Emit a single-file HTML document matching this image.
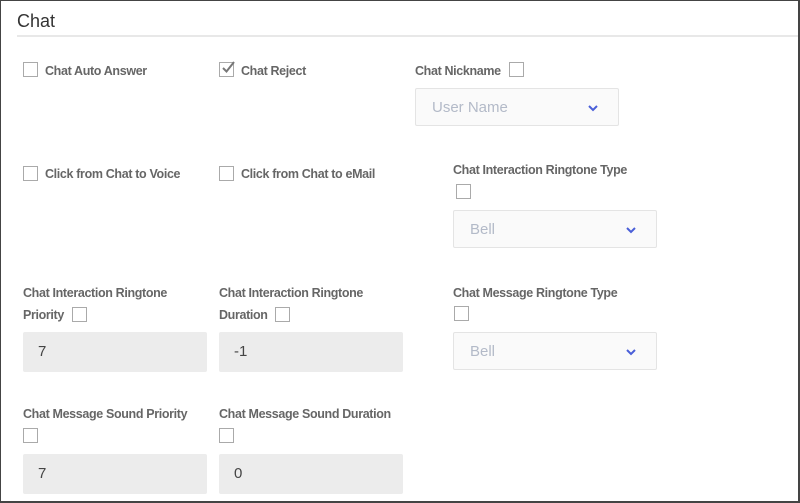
<!DOCTYPE html>
<html><head><style>
*{margin:0;padding:0;box-sizing:border-box}
body{width:800px;height:503px;overflow:hidden;background:#fff;font-family:"Liberation Sans",Arial,sans-serif;position:relative}
.frame{position:absolute;left:0;top:0;width:800px;height:503px;border:1px solid #444;border-right-width:2px;border-bottom-width:2px}
.h{position:absolute;left:17px;top:11px;font-size:18px;color:#333}
.line{position:absolute;left:17px;right:2px;top:35px;height:2px;background:#e8e8e8}
.cb{position:absolute;width:15px;height:15px;border:1.5px solid #aaa;background:#fff}
.lb{position:absolute;font-size:12.5px;font-weight:bold;color:#666;line-height:22px;white-space:nowrap;letter-spacing:-0.35px}
.sel{position:absolute;width:204px;height:38px;background:#fafafa;border:1px solid #e4e4e4;border-radius:2px;color:#b3bac8;font-size:15px;line-height:38px;padding-left:16px}
.sel svg{position:absolute;right:20px;top:16px}
.inp{position:absolute;width:184px;height:40px;background:#ececec;border-radius:2px;color:#444;font-size:15px;line-height:40px;padding-left:15px}
</style></head><body>
<div class="frame"></div>
<div class="h">Chat</div>
<div class="line"></div>

<div class="cb" style="left:23px;top:62px"></div><div class="lb" style="left:45px;top:60px">Chat Auto Answer</div>
<div class="cb" style="left:219px;top:62px"></div>
<svg style="position:absolute;left:220px;top:60px" width="16" height="16"><path d="M3 8 L6.5 11.5 L14 2" stroke="#777" stroke-width="2" fill="none"/></svg>
<div class="lb" style="left:241px;top:60px">Chat Reject</div>
<div class="lb" style="left:415px;top:60px">Chat Nickname</div><div class="cb" style="left:509px;top:62px"></div>
<div class="sel" style="left:415px;top:88px">User Name<svg width="10" height="7"><path d="M1 1 L5 5 L9 1" stroke="#4a5fd8" stroke-width="2" fill="none"/></svg></div>

<div class="cb" style="left:23px;top:166px"></div><div class="lb" style="left:45px;top:163px">Click from Chat to Voice</div>
<div class="cb" style="left:219px;top:166px"></div><div class="lb" style="left:241px;top:163px">Click from Chat to eMail</div>
<div class="lb" style="left:453px;top:159px">Chat Interaction Ringtone Type</div><div class="cb" style="left:456px;top:184px"></div>
<div class="sel" style="left:453px;top:210px">Bell<svg width="10" height="7"><path d="M1 1 L5 5 L9 1" stroke="#4a5fd8" stroke-width="2" fill="none"/></svg></div>

<div class="lb" style="left:23px;top:282px">Chat Interaction Ringtone</div>
<div class="lb" style="left:23px;top:304px">Priority</div><div class="cb" style="left:72px;top:307px"></div>
<div class="lb" style="left:219px;top:282px">Chat Interaction Ringtone</div>
<div class="lb" style="left:219px;top:304px">Duration</div><div class="cb" style="left:275px;top:307px"></div>
<div class="lb" style="left:453px;top:282px">Chat Message Ringtone Type</div><div class="cb" style="left:454px;top:306px"></div>
<div class="inp" style="left:23px;top:332px">7</div>
<div class="inp" style="left:219px;top:332px">-1</div>
<div class="sel" style="left:453px;top:332px">Bell<svg width="10" height="7"><path d="M1 1 L5 5 L9 1" stroke="#4a5fd8" stroke-width="2" fill="none"/></svg></div>

<div class="lb" style="left:23px;top:403px">Chat Message Sound Priority</div><div class="cb" style="left:23px;top:428px"></div>
<div class="lb" style="left:219px;top:403px">Chat Message Sound Duration</div><div class="cb" style="left:219px;top:428px"></div>
<div class="inp" style="left:23px;top:454px">7</div>
<div class="inp" style="left:219px;top:454px">0</div>
</body></html>
